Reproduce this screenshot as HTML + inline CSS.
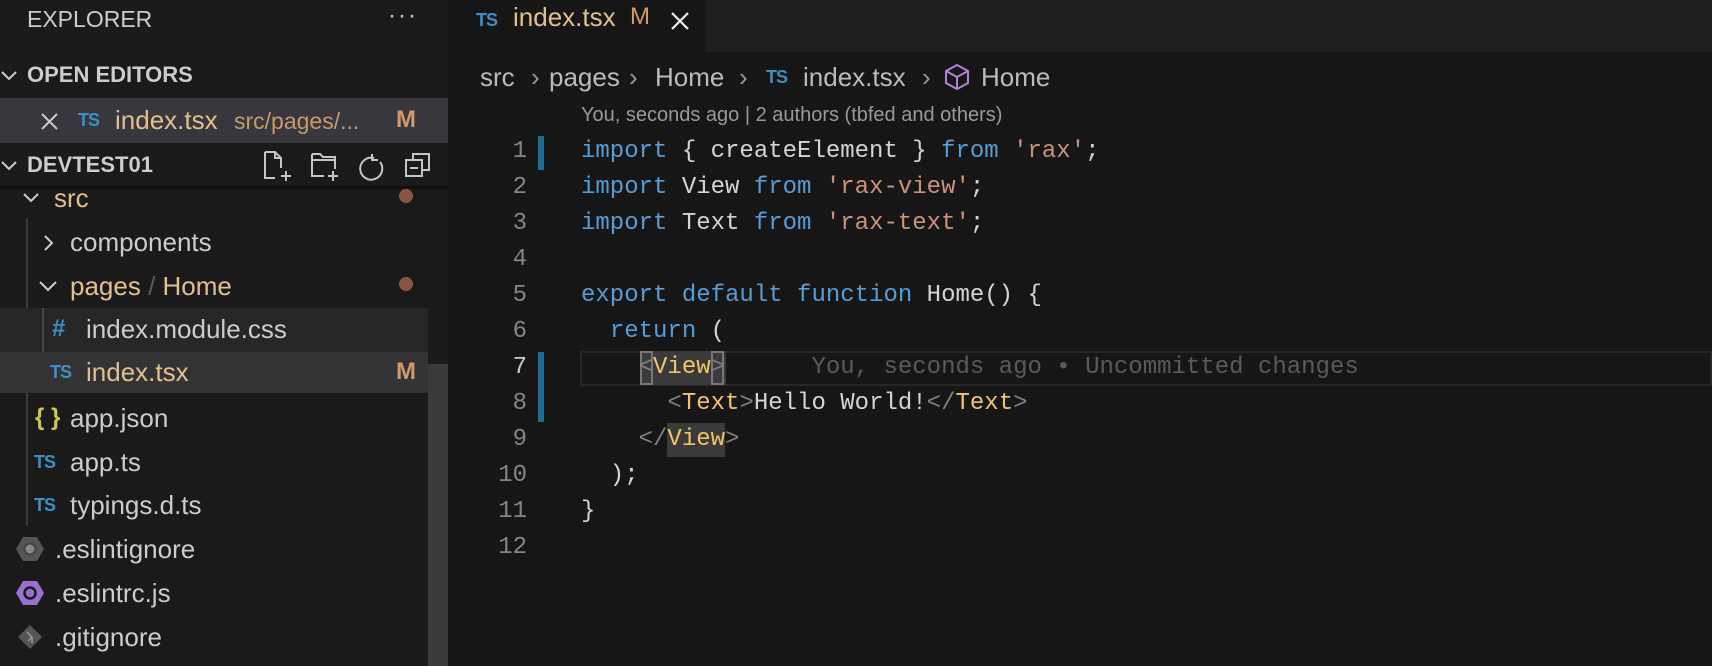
<!DOCTYPE html>
<html><head><meta charset="utf-8"><style>
*{margin:0;padding:0;box-sizing:border-box}
body{width:1712px;height:666px;overflow:hidden;background:#161616;font-family:"Liberation Sans",sans-serif;position:relative;color:#ccc}
.a{position:absolute;white-space:pre}
#side{position:absolute;left:0;top:0;width:448px;height:666px;background:#1a1a1a}
.row{position:absolute;left:0;width:428px;height:44px}
.t{position:absolute;font-size:26px;line-height:44px;white-space:pre}
.ts{position:absolute;font-size:18px;font-weight:bold;color:#3b8fc9;line-height:44px;letter-spacing:-1px}
.tan{color:#e2c08d}
.code{position:absolute;left:581px;top:134px;font-family:"Liberation Mono",monospace;font-size:24px;line-height:36px;color:#d4d4d4;white-space:pre}
.k{color:#569cd6}.s{color:#ce9178}.g{color:#808080}.y{color:#f1c46b}
.ln{position:absolute;left:440px;width:87px;text-align:right;top:134px;font-family:"Liberation Mono",monospace;font-size:24px;line-height:36px;color:#858585;white-space:pre}
.bc{position:absolute;top:62px;font-size:26px;color:#bbb;white-space:pre}
.sep{position:absolute;top:62px;font-size:26px;color:#999}
</style></head><body>
<div id="side">
<div class="a" style="left:27px;top:6px;font-size:23px;color:#ccc">EXPLORER</div>
<div class="a" style="left:388px;top:2px;font-size:24px;color:#ccc;letter-spacing:2px">···</div>
<svg class="a" style="left:0;top:68px" width="18" height="16"><path d="M2 4l7 7 7-7" stroke="#ccc" stroke-width="2" fill="none"/></svg>
<div class="a" style="left:27px;top:62px;font-size:22px;font-weight:bold;color:#ccc">OPEN EDITORS</div>
<div class="row" style="top:98px;height:45px;background:#37373d;width:448px"></div>
<svg class="a" style="left:40px;top:112px" width="19" height="19"><path d="M2 2l15 15M17 2L2 17" stroke="#ccc" stroke-width="2"/></svg>
<div class="ts" style="left:78px;top:98px">TS</div>
<div class="t tan" style="left:115px;top:98px">index.tsx</div>
<div class="t" style="left:234px;top:99px;font-size:23px;color:#c69a6a">src/pages/...</div>
<div class="t" style="left:396px;top:98px;font-size:24px;font-weight:bold;color:#d19a66">M</div>
<svg class="a" style="left:0;top:158px" width="18" height="16"><path d="M2 4l7 7 7-7" stroke="#ccc" stroke-width="2" fill="none"/></svg>
<div class="a" style="left:27px;top:152px;font-size:22px;font-weight:bold;color:#ccc">DEVTEST01</div>
<svg class="a" style="left:262px;top:150px" width="176" height="36" fill="none" stroke="#c5c5c5" stroke-width="2">
<path d="M3 2h10l6 6v10M3 2v26h10M19 26h10M24 21v10M13 2v6h6"/>
<path d="M50 4v22h12M50 4h8l3 3h12v12M50 10h23M66 26h10M71 21v10"/>
<path d="M112 8a11 11 0 1 0 6 4M110 4v6h6" />
<path d="M151 10v-6h16v16h-6M144 10h16v16h-16zM148 18h8"/>
</svg>
<div style="position:absolute;left:0;top:186px;width:448px;height:4px;background:linear-gradient(#0a0a0a,transparent)"></div>
<svg class="a" style="left:22px;top:190px" width="18" height="16"><path d="M2 4l7 7 7-7" stroke="#ccc" stroke-width="2" fill="none"/></svg>
<div class="t tan" style="left:54px;top:176px">src</div>
<div class="a" style="left:399px;top:189px;width:14px;height:14px;border-radius:7px;background:#8a5442"></div>
<div class="a" style="left:26px;top:218px;width:2px;height:308px;background:#3a3a3a"></div>
<svg class="a" style="left:42px;top:234px" width="14" height="18"><path d="M3 2l7 7-7 7" stroke="#ccc" stroke-width="2" fill="none"/></svg>
<div class="t" style="left:70px;top:220px">components</div>
<svg class="a" style="left:38px;top:278px" width="20" height="16"><path d="M2 4l8 8 8-8" stroke="#ccc" stroke-width="2" fill="none"/></svg>
<div class="t tan" style="left:70px;top:264px">pages<span style="color:#6a5a4a"> / </span>Home</div>
<div class="a" style="left:399px;top:277px;width:14px;height:14px;border-radius:7px;background:#8a5442"></div>
<div class="row" style="top:308px;background:#262626"></div>
<div class="a" style="left:42px;top:308px;width:2px;height:85px;background:#444"></div>
<div class="t" style="left:52px;top:307px;font-weight:bold;color:#3b8fc9;font-size:24px">#</div>
<div class="t" style="left:86px;top:307px">index.module.css</div>
<div class="row" style="top:352px;height:41px;background:#333336"></div>
<div class="ts" style="left:50px;top:350px">TS</div>
<div class="t tan" style="left:86px;top:350px">index.tsx</div>
<div class="t" style="left:396px;top:350px;font-size:24px;font-weight:bold;color:#d19a66">M</div>
<div class="t" style="left:35px;top:396px;color:#cbcb41;font-size:24px;font-weight:bold">{ }</div>
<div class="t" style="left:70px;top:396px">app.json</div>
<div class="ts" style="left:34px;top:440px">TS</div>
<div class="t" style="left:70px;top:440px">app.ts</div>
<div class="ts" style="left:34px;top:483px">TS</div>
<div class="t" style="left:70px;top:483px">typings.d.ts</div>
<svg class="a" style="left:16px;top:536px" width="28" height="26"><path d="M7 1h14l7 12-7 12H7L0 13z" fill="#555"/><circle cx="14" cy="13" r="5.5" fill="#888" stroke="#444" stroke-width="2"/></svg>
<div class="t" style="left:55px;top:527px">.eslintignore</div>
<svg class="a" style="left:16px;top:580px" width="28" height="26"><path d="M7 1h14l7 12-7 12H7L0 13z" fill="#9b6fd0"/><circle cx="14" cy="13" r="5.5" fill="#9b6fd0" stroke="#1a1a1a" stroke-width="2.5"/></svg>
<div class="t" style="left:55px;top:571px">.eslintrc.js</div>
<svg class="a" style="left:17px;top:624px" width="26" height="26"><path d="M13 1l12 12-12 12L1 13z" fill="#555"/><path d="M10 8l5 5v6M15 13l-4 4" stroke="#999" stroke-width="1.5" fill="none"/></svg>
<div class="t" style="left:55px;top:615px">.gitignore</div>
<div class="a" style="left:428px;top:364px;width:20px;height:302px;background:#3a3a3a"></div>
</div>
<!-- editor -->
<div class="a" style="left:448px;top:0;width:1264px;height:52px;background:#1e1e1e"></div>
<div class="a" style="left:448px;top:0;width:258px;height:52px;background:#161616"></div>
<div class="ts" style="left:476px;top:0;line-height:40px">TS</div>
<div class="a" style="left:513px;top:2px;font-size:26px;color:#e2c08d">index.tsx</div>
<div class="a" style="left:630px;top:3px;font-size:24px;color:#d19a66">M</div>
<svg class="a" style="left:670px;top:11px" width="20" height="20"><path d="M2 2l16 16M18 2L2 18" stroke="#eee" stroke-width="2.2"/></svg>
<div class="bc" style="left:480px">src</div>
<div class="sep" style="left:531px">›</div>
<div class="bc" style="left:549px">pages</div>
<div class="sep" style="left:629px">›</div>
<div class="bc" style="left:655px">Home</div>
<div class="sep" style="left:739px">›</div>
<div class="ts" style="left:766px;top:55px">TS</div>
<div class="bc" style="left:803px">index.tsx</div>
<div class="sep" style="left:922px">›</div>
<svg class="a" style="left:944px;top:63px" width="26" height="28" fill="none" stroke="#b180d7" stroke-width="2"><path d="M13 2l11 6v12l-11 6-11-6V8zM2 8l11 6 11-6M13 14v12"/></svg>
<div class="bc" style="left:981px">Home</div>
<div class="a" style="left:581px;top:104px;font-size:20px;color:#999">You, seconds ago | 2 authors (tbfed and others)</div>
<div class="a" style="left:580px;top:351px;width:1132px;height:35px;border:2px solid #262626"></div>
<div class="a" style="left:538px;top:136px;width:6px;height:34px;background:#1b6d94"></div>
<div class="a" style="left:538px;top:352px;width:6px;height:70px;background:#1b6d94"></div>
<div class="a" style="left:640px;top:351px;width:86px;height:34px;background:#3a3a3a"></div>
<div class="a" style="left:640px;top:351px;width:13px;height:34px;border:2px solid #777;background:transparent"></div>
<div class="a" style="left:711px;top:351px;width:13px;height:34px;border:2px solid #777"></div>
<div class="a" style="left:667px;top:423px;width:58px;height:34px;background:#3a3a3a"></div>
<div class="ln">1
2
3
4
5
6
<span style="color:#ccc">7</span>
8
9
10
11
12</div>
<div class="code"><span class="k">import</span> { createElement } <span class="k">from</span> <span class="s">'rax'</span>;
<span class="k">import</span> View <span class="k">from</span> <span class="s">'rax-view'</span>;
<span class="k">import</span> Text <span class="k">from</span> <span class="s">'rax-text'</span>;

<span class="k">export default function</span> Home() {
  <span class="k">return</span> (
    <span class="g">&lt;</span><span class="y">View</span><span class="g">&gt;</span>      <span style="color:#5a5a5a">You, seconds ago • Uncommitted changes</span>
      <span class="g">&lt;</span><span class="y">Text</span><span class="g">&gt;</span>Hello World!<span class="g">&lt;/</span><span class="y">Text</span><span class="g">&gt;</span>
    <span class="g">&lt;/</span><span class="y">View</span><span class="g">&gt;</span>
  );
}
</div>
</body></html>
